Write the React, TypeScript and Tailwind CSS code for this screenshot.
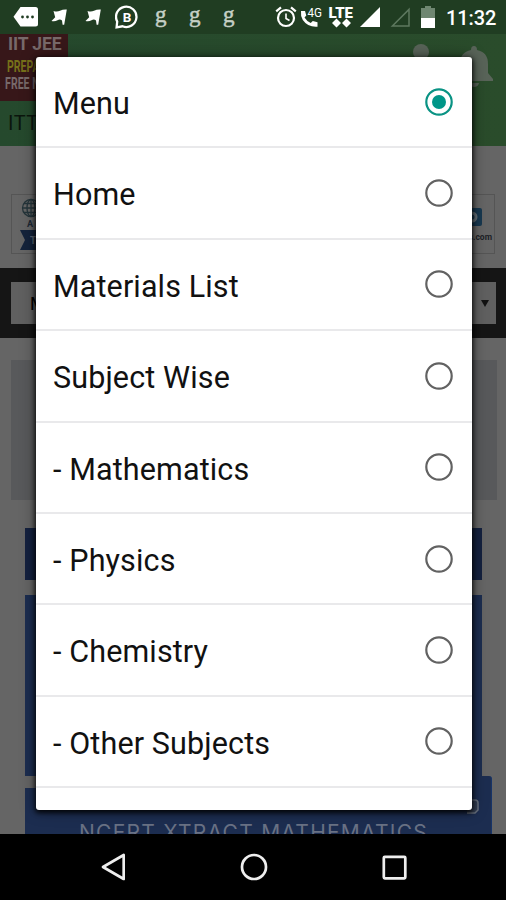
import React from 'react';

// Entries of the select dialog, the first one is picked
const OPTIONS = [
  'Menu',
  'Home',
  'Materials List',
  'Subject Wise',
  '- Mathematics',
  '- Physics',
  '- Chemistry',
  '- Other Subjects',
];

function Flag() {
  return (
    <svg className="h-5 w-[17px]" viewBox="0 0 17 20" fill="white">
      <path d="M2.5 4 Q6 5.3 9 3.8 Q12 2.2 15.8 2.5 L13.2 17.8 H11.6 L11 13.5 Q9 11.8 6.5 13.3 Q4 14.8 0.5 14 L4.2 10.2 Z" />
    </svg>
  );
}

function StatusBar() {
  return (
    <header className="flex h-[34px] shrink-0 items-center bg-[#203d22] text-white">
      <svg className="ml-[13px] h-5 w-[25px]" viewBox="0 0 25 20">
        <path d="M7.5 0 H22.5 Q25 0 25 2.5 V17 Q25 19.5 22.5 19.5 H7.5 L0.5 9.8 Z" fill="white" />
        <g fill="#203d22">
          <circle cx="9.5" cy="10" r="1.4" />
          <circle cx="14.5" cy="10" r="1.4" />
          <circle cx="19.5" cy="10" r="1.4" />
        </g>
      </svg>
      <div className="ml-[13px] flex gap-[17px]">
        <Flag />
        <Flag />
      </div>
      <svg className="ml-[13px] h-6 w-6" viewBox="0 0 24 24" fill="none" stroke="white" strokeWidth="2.3">
        <path d="M1.6 22.4 L2.2 16.5 A10.2 10.2 0 1 1 7.5 21.3 Z" />
        <text x="12" y="16.6" textAnchor="middle" fontFamily="Roboto, sans-serif" fontSize="13.5" fontWeight="700" fill="white" stroke="none">B</text>
      </svg>
      <div className="ml-[16px] flex -translate-y-[3px] gap-[22.5px] font-['Liberation_Serif',serif] text-[23px] leading-none text-[#c6d0c6] [-webkit-text-stroke:0.5px_#c6d0c6]">
        <span>g</span>
        <span>g</span>
        <span>g</span>
      </div>

      <div className="ml-auto flex items-center">
        <svg className="h-[22px] w-[22px]" viewBox="0 0 22 22" fill="none" stroke="white" strokeWidth="2.2">
          <circle cx="11" cy="12" r="8" />
          <path d="M11 7.5 V12.5 L14.5 14.5" strokeWidth="1.6" />
          <path d="M1.2 5.3 L6 1.3 M16 1.3 L20.8 5.3" />
        </svg>
        <svg className="ml-[3px] h-[22px] w-[23px]" viewBox="0 0 23 22" fill="white">
          <path d="M1 5 H5 L6.3 9.5 L4.5 11.4 Q6.7 15 10.7 17 L12.8 15 L17.5 16.2 V20.7 Q8 21.5 2.8 14 Q0.4 10 1 5 Z" />
          <text x="7.5" y="11" fontFamily="Roboto, sans-serif" fontSize="13" textLength="14.5" lengthAdjust="spacingAndGlyphs">4G</text>
        </svg>
        <svg className="ml-[5px] h-[22px] w-[26px] overflow-visible" viewBox="0 0 26 22" fill="white">
          <text x="0.5" y="11.8" fontFamily="Roboto, sans-serif" fontSize="15" fontWeight="900" textLength="24.5" lengthAdjust="spacingAndGlyphs">LTE</text>
          <path d="M8.5 12.5 L13 17 L8.5 21.5 L4 17 Z M18.5 12.5 L23 17 L18.5 21.5 L14 17 Z" />
        </svg>
        <svg className="ml-[6px] h-5 w-5" viewBox="0 0 20 20">
          <path d="M20 0 V20 H0 Z" fill="white" />
        </svg>
        <svg className="ml-[10px] h-5 w-5" viewBox="0 0 20 20">
          <path d="M19 2.4 V19 H2.4 Z" fill="none" stroke="#5d785f" strokeWidth="1.5" />
        </svg>
        <svg className="ml-[11px] h-[22px] w-[14px]" viewBox="0 0 14 22">
          <path d="M4 0 H10 V2 H14 V12 H0 V2 H4 Z" fill="#6f8771" />
          <path d="M0 12 H14 V22 H0 Z" fill="white" />
        </svg>
        <span className="ml-[11px] mr-[10px] w-[50px] whitespace-nowrap pt-px text-[20px] font-medium leading-[24px] tracking-[-0.1px]">11:32</span>
      </div>
    </header>
  );
}

function SiteHeader() {
  return (
    <div className="flex h-[112px] shrink-0 justify-between bg-linear-to-r from-[#25492d] to-[#2a4c2b]">
      <div>
        <div className="h-[67px] w-[68px] whitespace-nowrap bg-[#371719] pt-[2px] font-bold">
          <div className="pl-[8px] text-[17.5px] leading-[17px] tracking-[-0.1px] text-[#77696a]">IIT JEE</div>
          <div className="mt-[5px] origin-left scale-x-[0.64] pl-[11px] text-[16.5px] leading-[17px] text-[#77711a]">PREPA</div>
          <div className="origin-left scale-x-[0.64] pl-[8px] text-[16.5px] leading-[17px] text-[#77696a]">FREE N</div>
        </div>
        <div className="mt-[12px] pl-[8px] text-[20px] leading-[20px] tracking-[0.5px] text-[#0b160d]">ITT</div>
      </div>
      <div className="mr-[13px] mt-[10px] flex gap-[17px]">
        <svg className="h-[46px] w-[34px]" viewBox="0 0 34 46" fill="#596459">
          <circle cx="17" cy="8" r="8" />
          <path d="M1 36 Q1 20 17 20 Q33 20 33 36 Z" />
        </svg>
        <svg className="h-[46px] w-[38px]" viewBox="0 0 38 46" fill="#596459">
          <path d="M19 2 Q22 2 22 6 Q33 8 33 20 V29 L38 35 V37 H0 V35 L5 29 V20 Q5 8 16 6 Q16 2 19 2 Z" />
          <path d="M14 39 H24 Q23 43 19 43 Q15 43 14 39 Z" />
        </svg>
      </div>
    </div>
  );
}

function Banner() {
  return (
    <div className="mx-[11px] mt-[48px] flex h-[60px] shrink-0 justify-between border border-[#555]">
      <svg className="h-[58px] w-[50px]" viewBox="0 0 50 58">
        <g fill="none" stroke="#24343a" strokeWidth="1.3">
          <circle cx="19" cy="13" r="8.5" />
          <ellipse cx="19" cy="13" rx="4" ry="8.5" />
          <path d="M19 4.5 V21.5 M10.5 13 H27.5 M12 8.5 H26 M12 17.5 H26" />
        </g>
        <text x="15" y="32" fontFamily="Roboto, sans-serif" fontSize="9" fontWeight="700" fill="#1c2733">A</text>
        <path d="M8 35 H50 V55 H8 L13 45 Z" fill="#14233b" />
        <text x="18" y="49" fontFamily="Roboto, sans-serif" fontSize="10" fontWeight="700" fill="#5d6672">T</text>
      </svg>
      <div className="flex w-[50px] flex-col items-end pr-[2px] pt-[13px]">
        <svg className="mr-[10px] h-[18px] w-[18px]" viewBox="0 0 18 18">
          <rect width="18" height="18" rx="2" fill="#173850" />
          <circle cx="8" cy="9" r="5.5" fill="#66717a" />
          <circle cx="8" cy="9" r="2.5" fill="#173850" />
        </svg>
        <span className="mt-[6px] text-[8.5px] font-bold leading-[10px] text-[#1d2227]">s.com</span>
      </div>
    </div>
  );
}

function PageBehind() {
  return (
    <main className="relative flex min-h-0 flex-1 flex-col overflow-hidden bg-[#656565]">
      <SiteHeader />
      <Banner />
      <div className="mt-[14px] h-[70px] shrink-0 bg-[#151515] px-[11px] py-[14px]">
        <div className="-mr-px flex h-[42px] items-center justify-between bg-[#606060] pl-[19px] pr-[7px] text-black">
          <span className="text-[18px]">M</span>
          <svg className="h-[7px] w-[8px]" viewBox="0 0 8 7">
            <path d="M0 0 H8 L4 7 Z" fill="#111" />
          </svg>
        </div>
      </div>
      <div className="ml-[11px] mr-[9px] mt-[22px] h-[140px] shrink-0 bg-[#58595b]" />
      <div className="ml-[25px] mr-[24px] mt-[28px] h-[52px] shrink-0 bg-[#14213f]" />
      <div className="ml-[25px] mr-[24px] mt-[15px] h-[181px] shrink-0 bg-[#1c2d50]" />
      <div className="ml-[25px] mr-[14px] mt-[12px] h-[60px] shrink-0 bg-[#1c2d50] pl-[54px] pt-[33px] font-['Inter',sans-serif] text-[21px] leading-[24px] text-[#697184]">
        <span className="whitespace-nowrap tracking-[1.25px]">NCERT XTRACT MATHEMATICS</span>
      </div>
      {/* floating box pinned over the cards */}
      <div className="absolute bottom-0 right-[14px] h-[58px] w-[26px] rounded-tr-[3px] border-r border-[#173468] bg-[#1c2d50]">
        <svg className="ml-px mt-[23px] h-[16px] w-[12px]" viewBox="0 0 12 16">
          <path d="M0 1 H8 Q11 1 11 4 V11 L8 14 H0" fill="#333e53" stroke="#68707d" strokeWidth="1.5" />
        </svg>
      </div>
    </main>
  );
}

function NavBar() {
  return (
    <nav className="flex h-[66px] shrink-0 items-center justify-between bg-black pl-[101px] pr-[99px]">
      <svg className="h-7 w-6" viewBox="0 0 24 28">
        <path d="M22.7 2 V26 L2 14 Z" fill="none" stroke="#eee" strokeWidth="2.7" strokeLinejoin="round" />
      </svg>
      <svg className="h-7 w-7" viewBox="0 0 28 28">
        <circle cx="14" cy="14" r="12" fill="none" stroke="#eee" strokeWidth="2.7" />
      </svg>
      <svg className="h-[25px] w-[25px]" viewBox="0 0 25 25">
        <rect x="1.8" y="1.8" width="21.5" height="21.5" rx="1" fill="none" stroke="#eee" strokeWidth="2.7" />
      </svg>
    </nav>
  );
}

function Radio({ checked }: { checked: boolean }) {
  return (
    <svg className="h-7 w-7" viewBox="0 0 28 28">
      <circle cx="14" cy="14" r="12.7" fill="none" stroke={checked ? '#0a9384' : '#626262'} strokeWidth="2.2" />
      {checked && <circle cx="14" cy="14" r="7" fill="#009688" />}
    </svg>
  );
}

export default function App() {
  return (
    <div className="relative flex h-[900px] w-[506px] flex-col overflow-hidden font-['Roboto',sans-serif]">
      <StatusBar />
      <PageBehind />
      <NavBar />

      {/* select dialog */}
      <div className="absolute left-[36px] top-[57px] h-[753px] w-[436px] overflow-hidden rounded-[3px] bg-white shadow-[0_2px_5px_1px_rgba(0,0,0,0.85),0_0_16px_rgba(0,0,0,0.4)]">
        <ul>
          {OPTIONS.map((label, index) => (
            <li
              key={label}
              className="flex h-[91.4px] items-center justify-between border-b-2 border-[#e9e9eb] pl-[17px] pr-[19px]"
            >
              <span className="pt-[5px] text-[30.5px] leading-none tracking-[0.13px] text-[#111]">{label}</span>
              <Radio checked={index === 0} />
            </li>
          ))}
        </ul>
      </div>
    </div>
  );
}
